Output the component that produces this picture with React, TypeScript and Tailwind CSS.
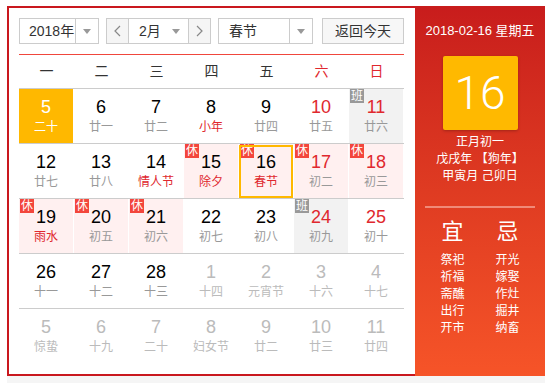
import React from 'react';

type Cell = {
  d: number;
  l: string;
  other?: boolean;
  weekend?: boolean;
  fest?: boolean;
  badge?: 'rest' | 'work';
  today?: boolean;
  selected?: boolean;
};

const rows: Cell[][] = [
  [
    { d: 5, l: '二十', today: true },
    { d: 6, l: '廿一' },
    { d: 7, l: '廿二' },
    { d: 8, l: '小年', fest: true },
    { d: 9, l: '廿四' },
    { d: 10, l: '廿五', weekend: true },
    { d: 11, l: '廿六', weekend: true, badge: 'work' },
  ],
  [
    { d: 12, l: '廿七' },
    { d: 13, l: '廿八' },
    { d: 14, l: '情人节', fest: true },
    { d: 15, l: '除夕', fest: true, badge: 'rest' },
    { d: 16, l: '春节', fest: true, badge: 'rest', selected: true },
    { d: 17, l: '初二', weekend: true, badge: 'rest' },
    { d: 18, l: '初三', weekend: true, badge: 'rest' },
  ],
  [
    { d: 19, l: '雨水', fest: true, badge: 'rest' },
    { d: 20, l: '初五', badge: 'rest' },
    { d: 21, l: '初六', badge: 'rest' },
    { d: 22, l: '初七' },
    { d: 23, l: '初八' },
    { d: 24, l: '初九', weekend: true, badge: 'work' },
    { d: 25, l: '初十', weekend: true },
  ],
  [
    { d: 26, l: '十一' },
    { d: 27, l: '十二' },
    { d: 28, l: '十三' },
    { d: 1, l: '十四', other: true },
    { d: 2, l: '元宵节', other: true },
    { d: 3, l: '十六', other: true },
    { d: 4, l: '十七', other: true },
  ],
  [
    { d: 5, l: '惊蛰', other: true },
    { d: 6, l: '十九', other: true },
    { d: 7, l: '二十', other: true },
    { d: 8, l: '妇女节', other: true },
    { d: 9, l: '廿二', other: true },
    { d: 10, l: '廿三', other: true },
    { d: 11, l: '廿四', other: true },
  ],
];

const weekdays = ['一', '二', '三', '四', '五', '六', '日'];
const good = ['祭祀', '祈福', '斋醮', '出行', '开市'];
const bad = ['开光', '嫁娶', '作灶', '掘井', '纳畜'];

const Caret = () => (
  <svg width="8" height="5" viewBox="0 0 8 5">
    <path d="M0 0h8L4 5z" fill="#999" />
  </svg>
);

const Chevron = ({ dir }: { dir: 'left' | 'right' }) => (
  <svg width="7" height="12" viewBox="0 0 7 12">
    <path
      d={dir === 'left' ? 'M6 1L1 6l5 5' : 'M1 1l5 5-5 5'}
      fill="none"
      stroke="#888"
      strokeWidth="1.2"
    />
  </svg>
);

const DayCell = ({ c }: { c: Cell }) => {
  let bg = '';
  if (c.today) bg = 'bg-[#ffb800]';
  else if (c.badge === 'rest') bg = 'bg-[#fff0f0]';
  else if (c.badge === 'work') bg = 'bg-[#f2f2f2]';

  let num = 'text-[#000]';
  if (c.today) num = 'text-white';
  else if (c.other) num = 'text-[#bbb]';
  else if (c.weekend) num = 'text-[#e0282e]';

  let lunar = 'text-[#999]';
  if (c.today) lunar = 'text-white';
  else if (c.other) lunar = 'text-[#bbb]';
  else if (c.fest) lunar = 'text-[#e0282e]';

  return (
    <div className={`relative h-[54px] flex flex-col items-center justify-center border-r border-white bg-clip-padding ${bg}`}>
      {c.badge && (
        <span
          className={`absolute left-[1px] top-0 w-[14px] h-[14px] text-[12px] leading-[14px] text-center text-white ${
            c.badge === 'rest' ? 'bg-[#f3463c]' : 'bg-[#999]'
          }`}
        >
          {c.badge === 'rest' ? '休' : '班'}
        </span>
      )}
      {c.selected && <span className="absolute left-0 right-0 top-[1px] bottom-0 border-2 border-[#ffb800]" />}
      <span className={`text-[18px] leading-[20px] ${num}`}>{c.d}</span>
      <span className={`text-[12px] leading-[16px] mt-[2px] ${lunar}`}>{c.l}</span>
    </div>
  );
};

export default function App() {
  return (
    <div className="w-[552px] h-[383px] bg-white font-['Liberation_Sans','Noto_Sans_CJK_SC',sans-serif] text-[#333]">
      <div className="pt-[6px] pl-[7px]">
        <div className="flex w-[538px] h-[370px]">
          {/* calendar */}
          <div className="w-[408px] border-2 border-r-0 border-[#c9181e] pt-[10px] pl-[10px]">
            <div className="flex items-center h-[26px] text-[14px]">
              <div className="flex w-[80px] h-[26px] border border-[#ccc] bg-white">
                <div className="w-[55px] pl-[9px] leading-[24px] whitespace-nowrap">2018年</div>
                <div className="flex-1 border-l border-[#ccc] flex items-center justify-center">
                  <Caret />
                </div>
              </div>
              <div className="flex ml-[7px] w-[105px] h-[26px] border border-[#ccc] bg-white">
                <div className="w-[22px] bg-[#f5f5f5] border-r border-[#ccc] flex items-center justify-center">
                  <Chevron dir="left" />
                </div>
                <div className="w-[59px] flex items-center pl-[10px] pr-[8px] justify-between">
                  <span className="leading-[24px] whitespace-nowrap">2月</span>
                  <Caret />
                </div>
                <div className="flex-1 bg-[#f5f5f5] border-l border-[#ccc] flex items-center justify-center">
                  <Chevron dir="right" />
                </div>
              </div>
              <div className="flex ml-[7px] w-[95px] h-[26px] border border-[#ccc] bg-white">
                <div className="w-[70px] pl-[10px] leading-[24px] whitespace-nowrap">春节</div>
                <div className="flex-1 border-l border-[#ccc] flex items-center justify-center">
                  <Caret />
                </div>
              </div>
              <button className="ml-[9px] w-[82px] h-[26px] border border-[#ccc] bg-[#f7f7f7] text-[14px] leading-[24px] text-[#333] whitespace-nowrap">
                返回今天
              </button>
            </div>

            <div className="w-[385px] mt-[10px] border-t border-[#f0463c]">
              <div className="grid grid-cols-7 h-[34px] border-b border-[#ccc] text-[14px]">
                {weekdays.map((w, i) => (
                  <div
                    key={w}
                    className={`flex items-center justify-center ${i >= 5 ? 'text-[#e0282e]' : 'text-[#333]'}`}
                  >
                    {w}
                  </div>
                ))}
              </div>
              {rows.map((r, ri) => (
                <div
                  key={ri}
                  className={`grid grid-cols-7 ${ri < rows.length - 1 ? 'border-b border-[#ccc]' : ''}`}
                >
                  {r.map((c, ci) => (
                    <DayCell key={ci} c={c} />
                  ))}
                </div>
              ))}
            </div>
          </div>

          {/* detail panel */}
          <div className="w-[130px] bg-linear-to-b from-[#c81c1c] to-[#f65428] text-white flex flex-col items-center pt-[16px]">
            <div className="text-[13px] leading-[18px] whitespace-nowrap">2018-02-16 星期五</div>
            <div className="mt-[16px] w-[75px] h-[74px] rounded-[2px] bg-[#ffb900] shadow-[0_1px_3px_rgba(0,0,0,0.25)] flex items-center justify-center">
              <span className="font-['Roboto','Liberation_Sans',sans-serif] font-light text-[46px] leading-none text-white">
                16
              </span>
            </div>
            <div className="mt-[4px] text-[12px] leading-[17px] text-center">
              <div>正月初一</div>
              <div>戊戌年 【狗年】</div>
              <div>甲寅月 己卯日</div>
            </div>
            <div className="mt-[21px] w-[110px] h-[2px] bg-[#f08a78]" />
            <div className="mt-[11px] flex">
              <div className="w-[55px] flex flex-col items-center">
                <div className="text-[22px] leading-[26px]">宜</div>
                <div className="mt-[7px] text-[12px] leading-[17px] text-center">
                  {good.map((g) => (
                    <div key={g}>{g}</div>
                  ))}
                </div>
              </div>
              <div className="w-[55px] flex flex-col items-center">
                <div className="text-[22px] leading-[26px]">忌</div>
                <div className="mt-[7px] text-[12px] leading-[17px] text-center">
                  {bad.map((g) => (
                    <div key={g}>{g}</div>
                  ))}
                </div>
              </div>
            </div>
          </div>
        </div>
        <div className="w-[538px] h-[7px] bg-[#f5f5f5]" />
      </div>
    </div>
  );
}
